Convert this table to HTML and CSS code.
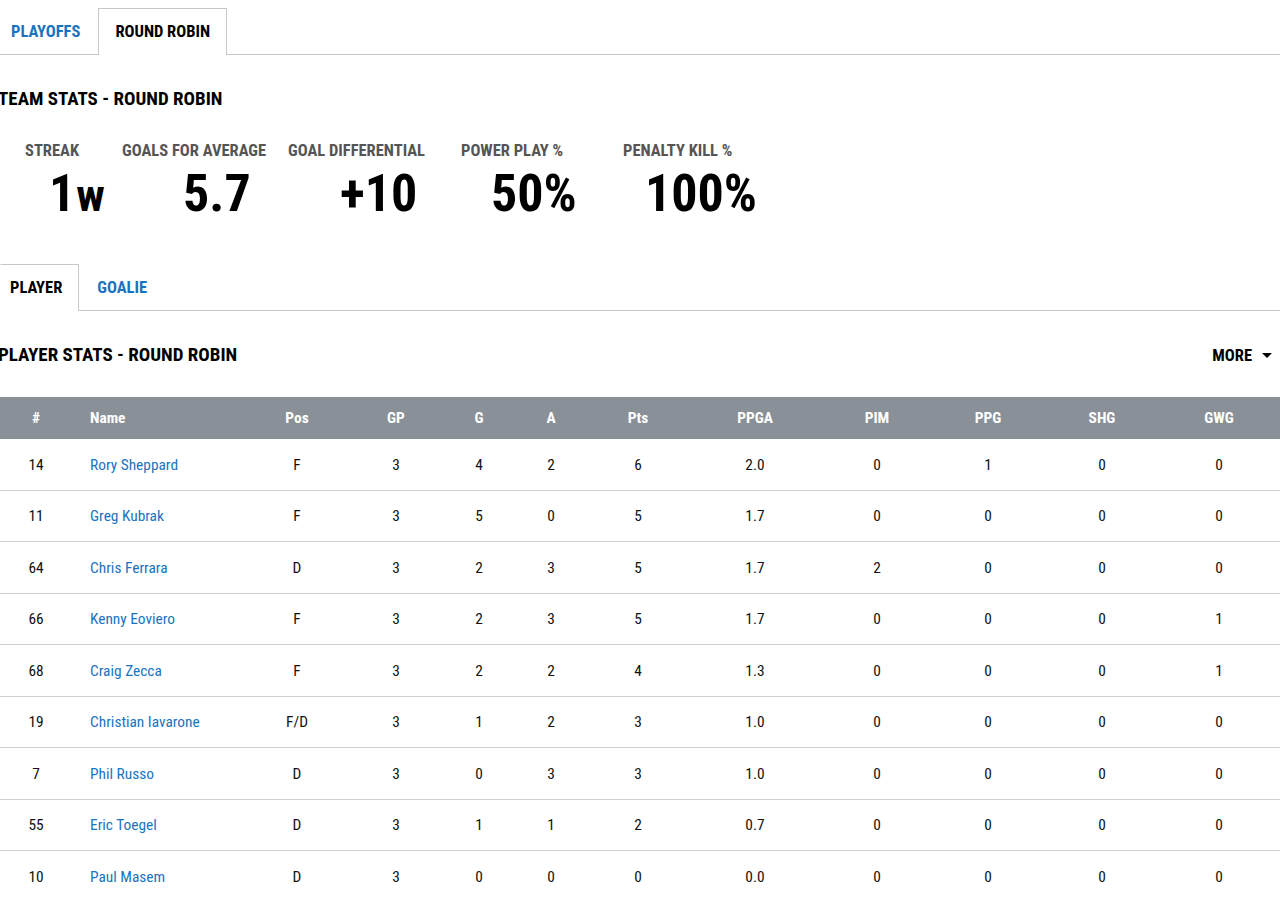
FILE: index.html
```html
<!DOCTYPE html>
<html lang="en">
<head>
<meta charset="utf-8">
<title>Team Stats - Round Robin</title>
<link rel="stylesheet" href="styles.css">
</head>
<body>
<div class="page">
  <nav class="tabs tabs-top">
    <a class="tab" href="#">PLAYOFFS</a>
    <a class="tab active" href="#">ROUND ROBIN</a>
  </nav>

  <h2 class="section-title">TEAM STATS - ROUND ROBIN</h2>

  <div class="team-stats">
    <div class="stat">
      <div class="stat-label">STREAK</div>
      <div class="stat-value">1<span class="unit">w</span></div>
    </div>
    <div class="stat">
      <div class="stat-label">GOALS FOR AVERAGE</div>
      <div class="stat-value">5.7</div>
    </div>
    <div class="stat">
      <div class="stat-label">GOAL DIFFERENTIAL</div>
      <div class="stat-value">+10</div>
    </div>
    <div class="stat">
      <div class="stat-label">POWER PLAY %</div>
      <div class="stat-value">50%</div>
    </div>
    <div class="stat">
      <div class="stat-label">PENALTY KILL %</div>
      <div class="stat-value">100%</div>
    </div>
  </div>

  <nav class="tabs tabs-sub">
    <a class="tab active" href="#">PLAYER</a>
    <a class="tab" href="#">GOALIE</a>
  </nav>

  <div class="table-head">
    <h2 class="section-title">PLAYER STATS - ROUND ROBIN</h2>
    <button class="more" type="button">MORE <span class="caret"></span></button>
  </div>

  <table class="stats">
    <colgroup>
      <col class="c-num"><col class="c-name"><col class="c-pos"><col class="c-gp"><col class="c-g"><col class="c-a"><col class="c-pts"><col class="c-ppga"><col class="c-pim"><col class="c-ppg"><col class="c-shg"><col class="c-gwg">
    </colgroup>
    <thead>
      <tr><th>#</th><th class="name">Name</th><th>Pos</th><th>GP</th><th>G</th><th>A</th><th>Pts</th><th>PPGA</th><th>PIM</th><th>PPG</th><th>SHG</th><th>GWG</th></tr>
    </thead>
    <tbody>
      <tr><td>14</td><td class="name"><a href="#">Rory Sheppard</a></td><td>F</td><td>3</td><td>4</td><td>2</td><td>6</td><td>2.0</td><td>0</td><td>1</td><td>0</td><td>0</td></tr>
      <tr><td>11</td><td class="name"><a href="#">Greg Kubrak</a></td><td>F</td><td>3</td><td>5</td><td>0</td><td>5</td><td>1.7</td><td>0</td><td>0</td><td>0</td><td>0</td></tr>
      <tr><td>64</td><td class="name"><a href="#">Chris Ferrara</a></td><td>D</td><td>3</td><td>2</td><td>3</td><td>5</td><td>1.7</td><td>2</td><td>0</td><td>0</td><td>0</td></tr>
      <tr><td>66</td><td class="name"><a href="#">Kenny Eoviero</a></td><td>F</td><td>3</td><td>2</td><td>3</td><td>5</td><td>1.7</td><td>0</td><td>0</td><td>0</td><td>1</td></tr>
      <tr><td>68</td><td class="name"><a href="#">Craig Zecca</a></td><td>F</td><td>3</td><td>2</td><td>2</td><td>4</td><td>1.3</td><td>0</td><td>0</td><td>0</td><td>1</td></tr>
      <tr><td>19</td><td class="name"><a href="#">Christian Iavarone</a></td><td>F/D</td><td>3</td><td>1</td><td>2</td><td>3</td><td>1.0</td><td>0</td><td>0</td><td>0</td><td>0</td></tr>
      <tr><td>7</td><td class="name"><a href="#">Phil Russo</a></td><td>D</td><td>3</td><td>0</td><td>3</td><td>3</td><td>1.0</td><td>0</td><td>0</td><td>0</td><td>0</td></tr>
      <tr><td>55</td><td class="name"><a href="#">Eric Toegel</a></td><td>D</td><td>3</td><td>1</td><td>1</td><td>2</td><td>0.7</td><td>0</td><td>0</td><td>0</td><td>0</td></tr>
      <tr><td>10</td><td class="name"><a href="#">Paul Masem</a></td><td>D</td><td>3</td><td>0</td><td>0</td><td>0</td><td>0.0</td><td>0</td><td>0</td><td>0</td><td>0</td></tr>
    </tbody>
  </table>
</div>
</body>
</html>
```

FILE: styles.css
```css
html, body {
  margin: 0;
  padding: 0;
  background: #fff;
  overflow-x: hidden;
}

body {
  font-family: "Roboto Condensed", Roboto, "Liberation Sans Narrow", sans-serif;
  font-stretch: 75%;
  color: #000;
}

.page {
  padding-top: 8px;
}

/* Tabs */
.tabs {
  display: flex;
  border-bottom: 1px solid #c8c8c8;
}

.tab {
  display: block;
  height: 45px;
  line-height: 45px;
  padding: 0 17px 0 10px;
  font-size: 16.5px;
  font-weight: 700;
  color: #1a73c0;
  text-decoration: none;
  border: 1px solid transparent;
  border-bottom: none;
  margin-bottom: -1px;
}

.tab.active {
  color: #000;
  background: #fff;
  border-color: #c8c8c8;
  height: 46px;
  padding: 0 16px;
}

.tabs-sub .tab {
  padding-left: 17px;
}

.tabs-sub .tab.active {
  border-left-color: transparent;
  padding: 0 16px 0 9px;
}

/* Headings */
.section-title {
  margin: 0 0 0 -2px;
  font-size: 19px;
  font-weight: 700;
  line-height: 22px;
}

.tabs-top + .section-title {
  margin-top: 33px;
}

/* Team stats */
.team-stats {
  display: grid;
  grid-template-columns: 97px 166px 173px 162px auto;
  padding-left: 25px;
  margin-top: 32px;
  height: 122px;
}

.stat-label {
  font-size: 16.5px;
  font-weight: 700;
  color: #555;
  line-height: 18px;
}

.stat-value {
  font-size: 52px;
  font-weight: 700;
  line-height: 52px;
  margin-top: 8px;
}

.stat-value .unit {
  margin-left: 1px;
  font-size: 45px;
}

.stat:nth-child(1) .stat-value { padding-left: 24px; }
.stat:nth-child(2) .stat-value { padding-left: 61px; }
.stat:nth-child(3) .stat-value { padding-left: 52px; }
.stat:nth-child(4) .stat-value { padding-left: 30px; }
.stat:nth-child(5) .stat-value { padding-left: 22px; }

/* Table header row */
.table-head {
  display: flex;
  justify-content: space-between;
  align-items: center;
  margin-top: 33px;
  height: 22px;
}

.more {
  background: none;
  border: none;
  font: inherit;
  font-size: 16.5px;
  font-weight: 700;
  color: #000;
  padding: 0;
  margin-right: 8px;
  display: flex;
  align-items: center;
  gap: 10px;
  cursor: pointer;
}

.caret {
  display: inline-block;
  width: 0;
  height: 0;
  border-left: 5px solid transparent;
  border-right: 5px solid transparent;
  border-top: 5px solid #000;
}

/* Stats table */
.stats {
  margin-top: 31px;
  border-collapse: collapse;
  table-layout: fixed;
  width: 1282px;
  font-size: 15.4px;
}

.c-num { width: 72px; }
.c-name { width: 178px; }
.c-pos { width: 94px; }
.c-gp { width: 104px; }
.c-g { width: 62px; }
.c-a { width: 82px; }
.c-pts { width: 92px; }
.c-ppga { width: 142px; }
.c-pim { width: 102px; }
.c-ppg { width: 120px; }
.c-shg { width: 108px; }
.c-gwg { width: 126px; }

.stats th {
  background: #8a9097;
  color: #fff;
  font-weight: 700;
  height: 42px;
  padding: 0;
  text-align: center;
}

.stats td {
  height: 49.5px;
  padding: 1px 0 0;
  text-align: center;
  border-bottom: 1px solid #cfcfcf;
  color: #111;
}

.stats .name {
  text-align: left;
  padding-left: 18px;
}

.stats td a {
  color: #1a73c0;
  text-decoration: none;
}
```
